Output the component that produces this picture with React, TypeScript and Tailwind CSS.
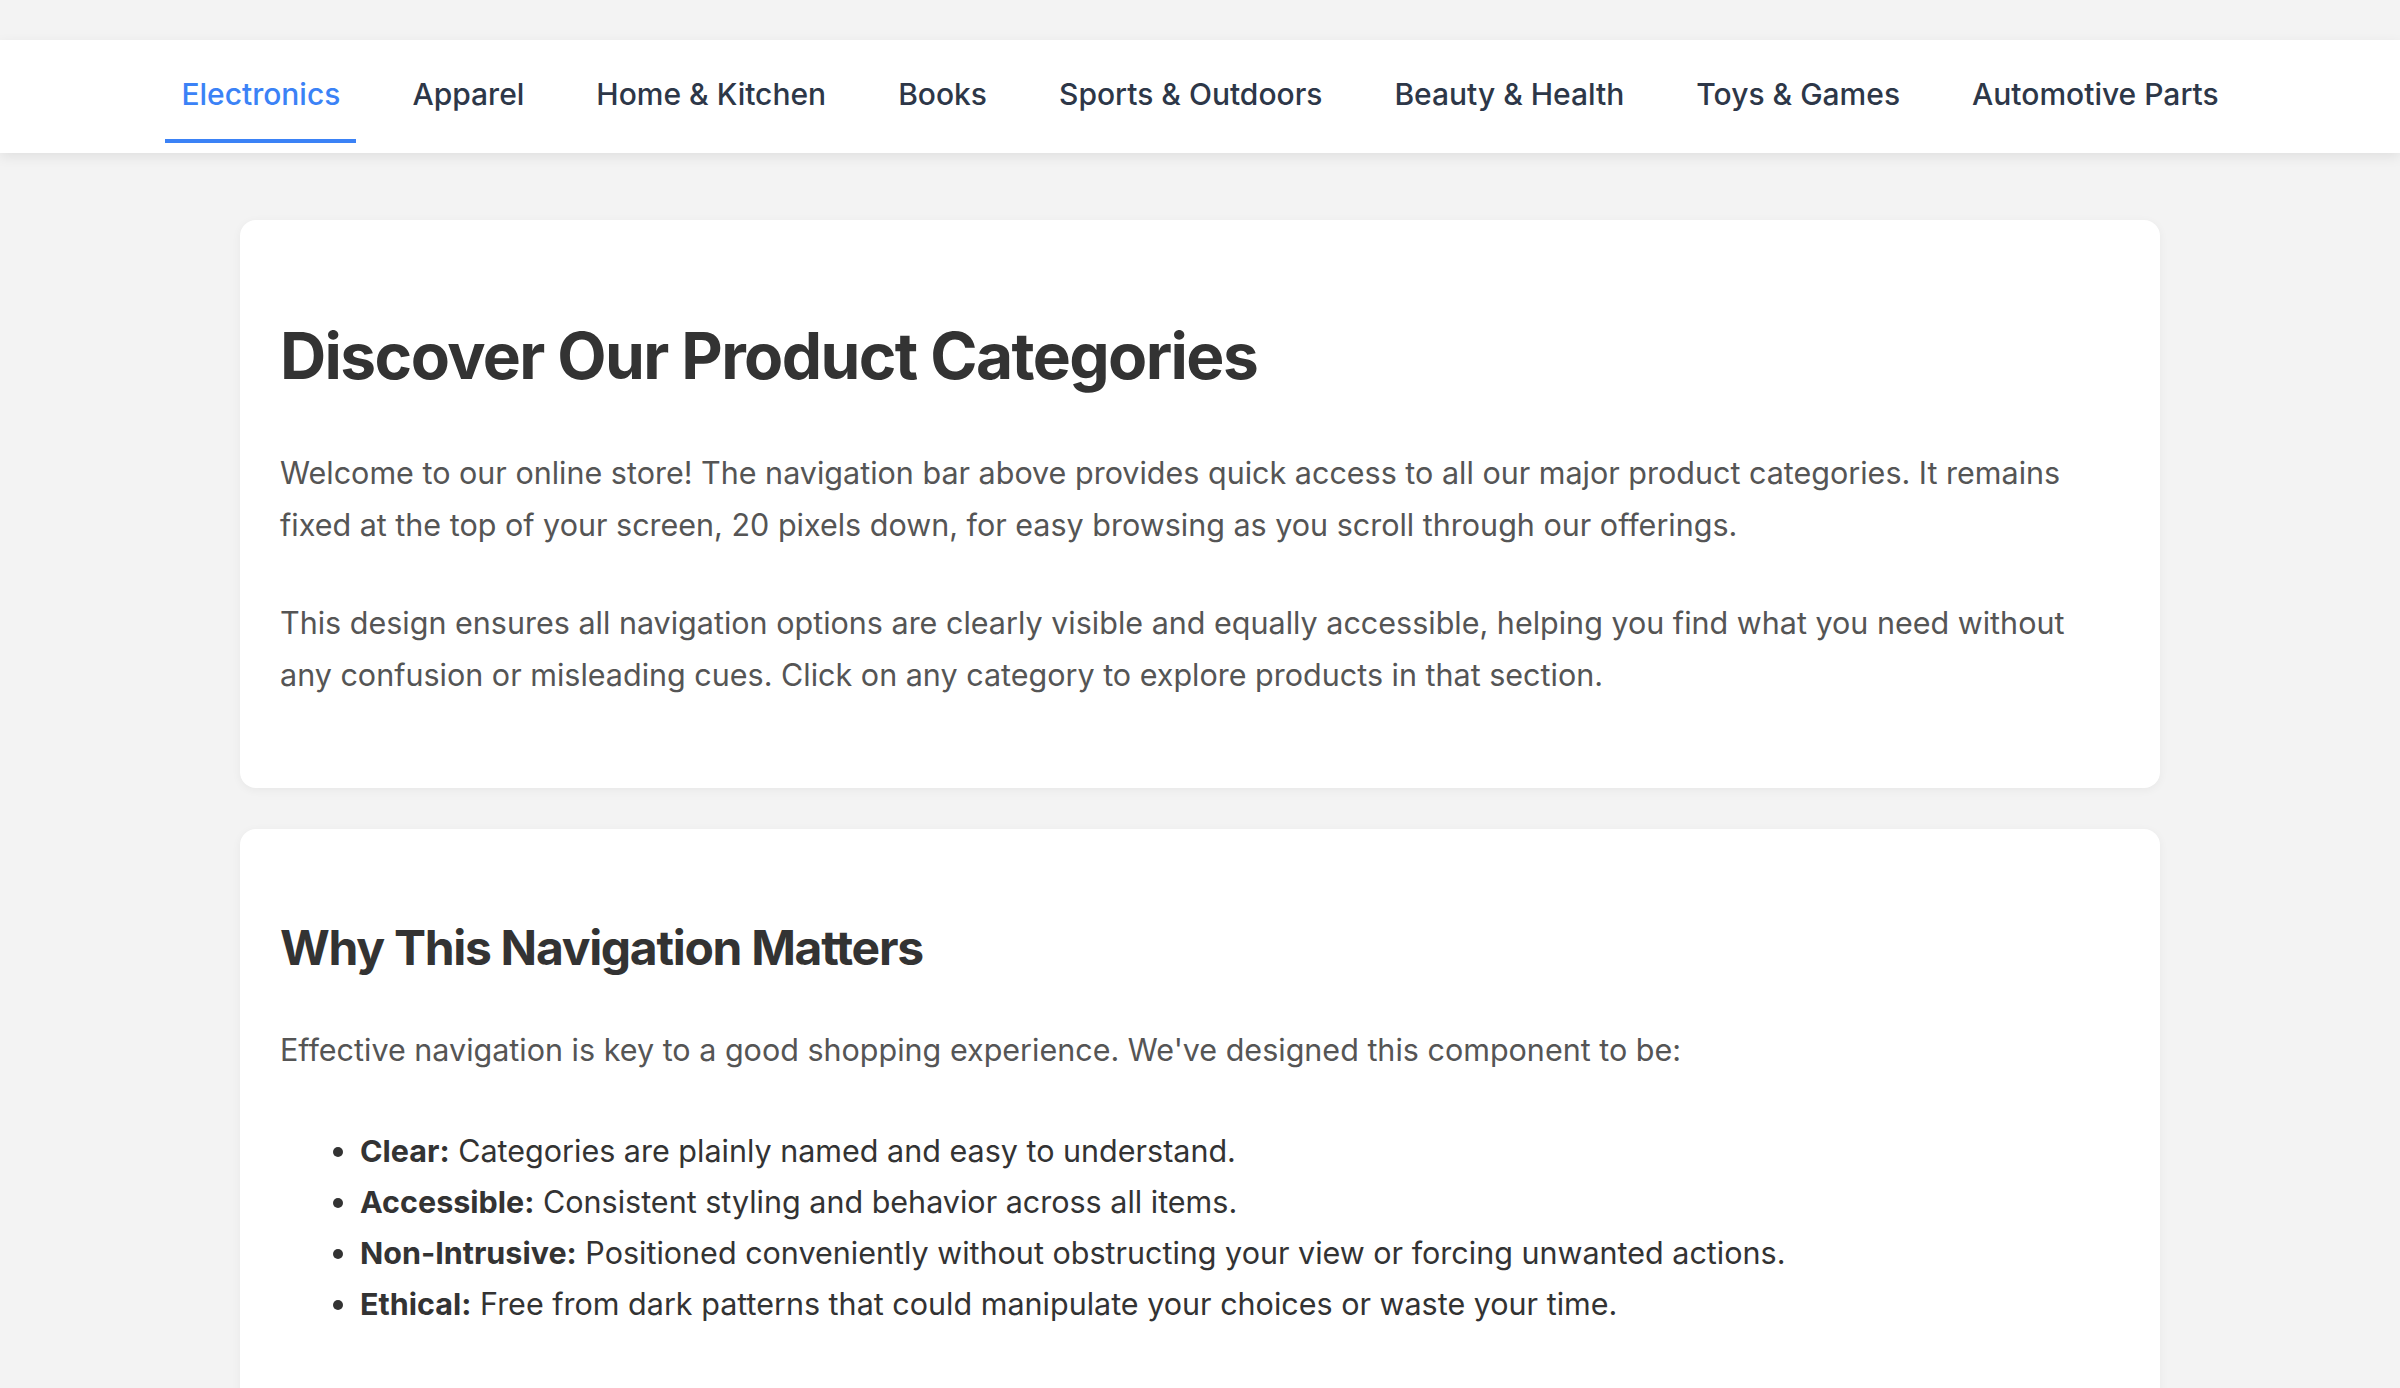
import React from "react";

const items = [
  "Electronics",
  "Apparel",
  "Home & Kitchen",
  "Books",
  "Sports & Outdoors",
  "Beauty & Health",
  "Toys & Games",
  "Automotive Parts",
];

export default function App() {
  return (
    <div
      className="min-h-screen bg-[#f3f3f3] pt-[40px] pb-[80px]"
      style={{ fontFamily: "Inter, 'Noto Sans', sans-serif" }}
    >
      <nav className="bg-white shadow-[0_4px_12px_rgba(0,0,0,0.08)] py-[10px]">
        <ul className="flex justify-center gap-[40px]">
          {items.map((it, i) => (
            <li key={it}>
              <a
                href="#"
                className={
                  i === 0
                    ? "block px-[16px] pt-[22px] pb-[22px] text-[30px] leading-[45px] font-medium text-[#3b82f6] border-b-4 border-[#3b82f6]"
                    : "block px-[16px] pt-[22px] pb-[22px] text-[30px] leading-[45px] font-medium text-[#2d3748] border-b-4 border-transparent"
                }
              >
                {it}
              </a>
            </li>
          ))}
        </ul>
      </nav>

      <main className="w-[1920px] mx-auto mt-[67px] flex flex-col gap-[41px]">
        <section className="bg-white rounded-[16px] shadow-[0_2px_10px_rgba(0,0,0,0.05)] p-[40px]">
          <h1 className="mt-[57px] text-[64px] leading-[77px] tracking-[-1.6px] font-bold text-[#333333]">
            Discover Our Product Categories
          </h1>
          <p className="mt-[53px] mb-[46px] text-[30.5px] leading-[52px] text-[#555555]">
            Welcome to our online store! The navigation bar above provides quick access to all our major product
            categories. It remains fixed at the top of your screen, 20 pixels down, for easy browsing as you scroll
            through our offerings.
          </p>
          <p className="mb-[47px] text-[30.5px] leading-[52px] text-[#555555]">
            This design ensures all navigation options are clearly visible and equally accessible, helping you find
            what you need without any confusion or misleading cues. Click on any category to explore products in that
            section.
          </p>
        </section>

        <section className="bg-white rounded-[16px] shadow-[0_2px_10px_rgba(0,0,0,0.05)] p-[40px]">
          <h2 className="mt-[50px] text-[48px] leading-[58px] tracking-[-1.3px] font-bold text-[#333333]">
            Why This Navigation Matters
          </h2>
          <p className="mt-[47px] text-[30.5px] leading-[52px] text-[#555555]">
            Effective navigation is key to a good shopping experience. We've designed this component to be:
          </p>
          <ul className="mt-[49px] mb-[48px] list-disc pl-[80px] text-[30.5px] leading-[51px] text-[#333333]">
            <li>
              <strong className="font-bold">Clear:</strong> Categories are plainly named and easy to understand.
            </li>
            <li>
              <strong className="font-bold">Accessible:</strong> Consistent styling and behavior across all items.
            </li>
            <li>
              <strong className="font-bold">Non-Intrusive:</strong> Positioned conveniently without obstructing your
              view or forcing unwanted actions.
            </li>
            <li>
              <strong className="font-bold">Ethical:</strong> Free from dark patterns that could manipulate your
              choices or waste your time.
            </li>
          </ul>
        </section>
      </main>
    </div>
  );
}
